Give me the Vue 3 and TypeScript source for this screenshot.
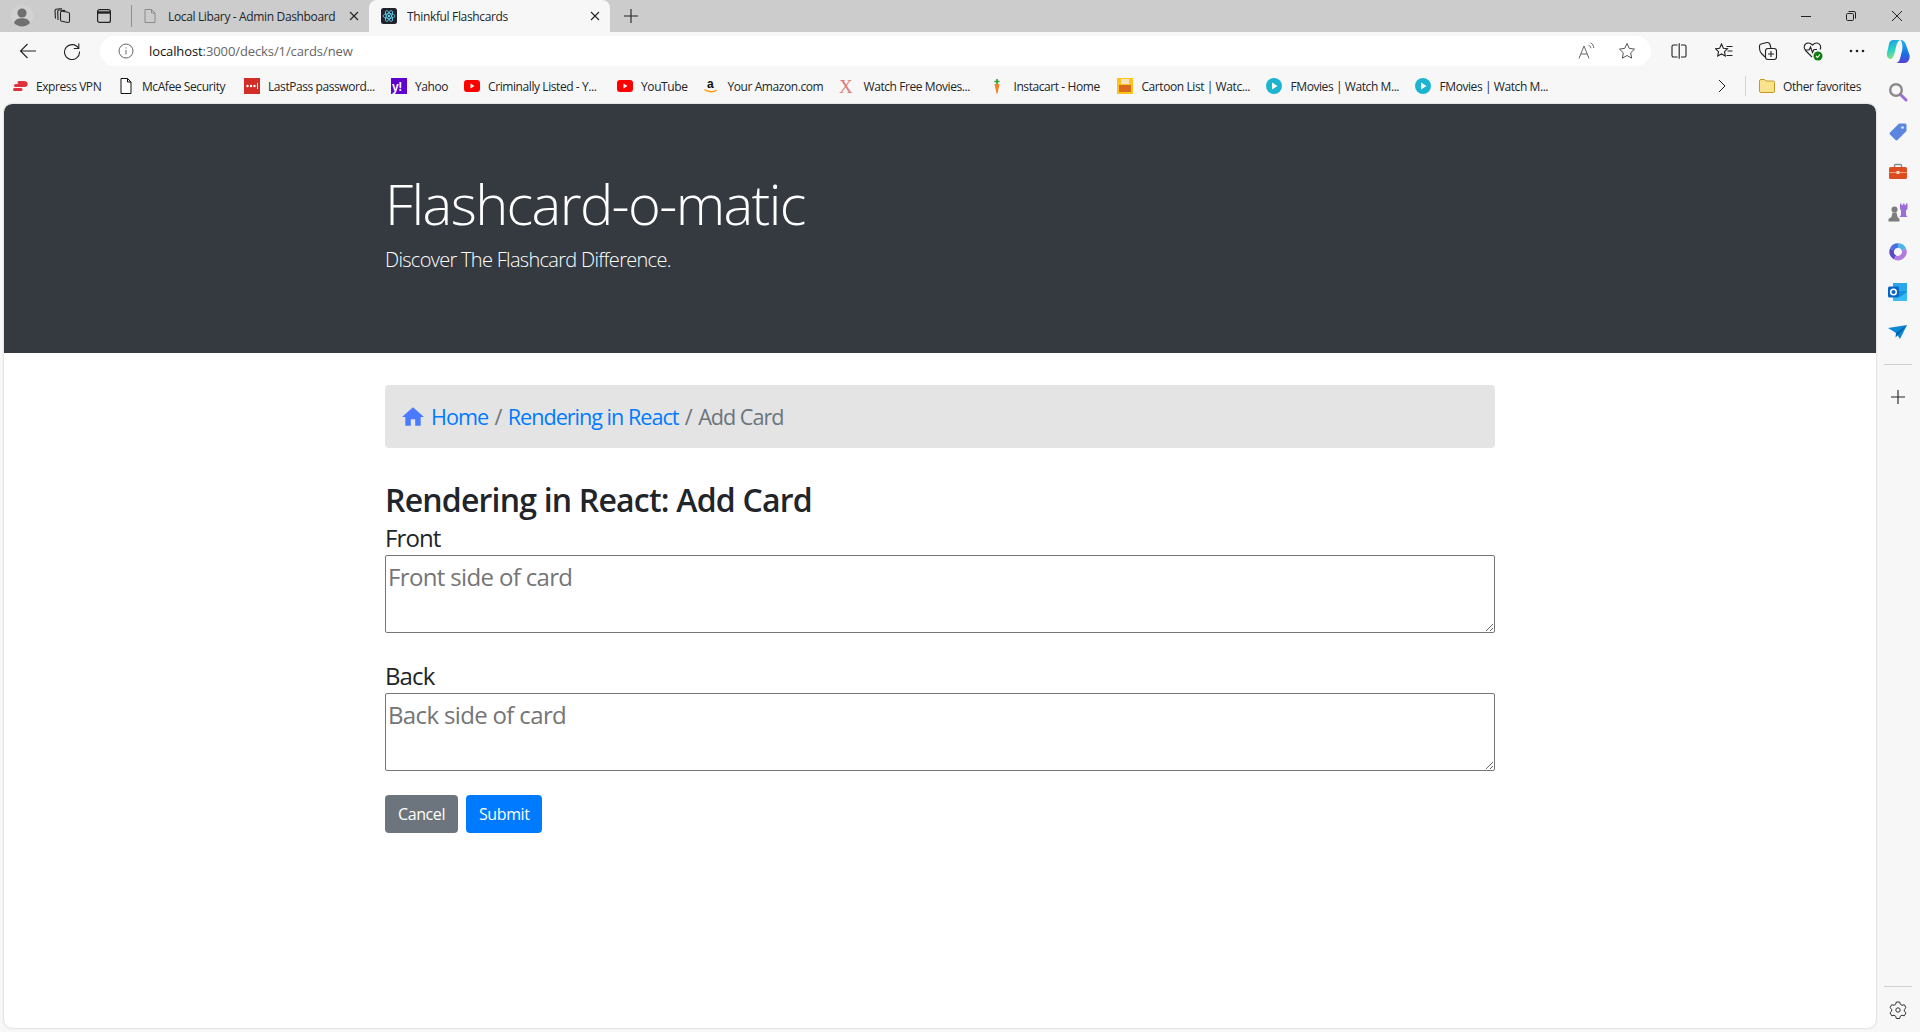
<script setup lang="ts">
import { reactive } from 'vue'

type Mark = { label: string; icon: string; width: number }

const bookmarks: Mark[] = [
  { label: 'Express VPN', icon: 'express', width: 66 },
  { label: 'McAfee Security', icon: 'page', width: 86 },
  { label: 'LastPass password...', icon: 'lastpass', width: 107 },
  { label: 'Yahoo', icon: 'yahoo', width: 32 },
  { label: 'Criminally Listed - Y...', icon: 'youtube', width: 113 },
  { label: 'YouTube', icon: 'youtube', width: 46 },
  { label: 'Your Amazon.com', icon: 'amazon', width: 96 },
  { label: 'Watch Free Movies...', icon: 'x', width: 110 },
  { label: 'Instacart - Home', icon: 'carrot', width: 88 },
  { label: 'Cartoon List | Watc...', icon: 'cartoon', width: 109 },
  { label: 'FMovies | Watch M...', icon: 'fmovies', width: 109 },
  { label: 'FMovies | Watch M...', icon: 'fmovies', width: 109 },
]

const card = reactive({ front: '', back: '' })
</script>

<template>
  <div class="browser">
    <div class="tabstrip">
      <div class="strip-btn">
        <svg width="22" height="22" viewBox="0 0 22 22">
          <circle cx="11" cy="11" r="11" fill="#d2d2d2" />
          <circle cx="11" cy="8" r="4.600" fill="#707070" />
          <path d="M3 18c1-3.500 4-4.800 8-4.800s7 1.300 8 4.800a11 11 0 0 1-16 0z" fill="#707070" />
        </svg>
      </div>
      <div class="strip-btn">
        <svg width="18" height="18" viewBox="0 0 18 18" fill="none" stroke="#222" stroke-width="1.100">
          <path d="M7.500 5.500a1.500 1.500 0 0 1 1.700-1.200l6 1a1.500 1.500 0 0 1 1.300 1.500v7.200a1.500 1.500 0 0 1-1.800 1.500l-6-1.300a1.500 1.500 0 0 1-1.200-1.500z" />
          <path d="M5 13 4.700 4.500A1.500 1.500 0 0 1 6.300 3l6 .6" />
          <path d="M2.500 11.500 2 4A1.800 1.800 0 0 1 3.800 2L9 1.800" />
        </svg>
      </div>
      <div class="strip-btn strip-btn-tabs">
        <svg width="16" height="16" viewBox="0 0 16 16" fill="none" stroke="#222" stroke-width="1.200">
          <rect x="1.600" y="1.600" width="12.800" height="12.800" rx="2" />
          <path d="M1.600 4.500h12.800" stroke-width="2.400" />
        </svg>
      </div>
      <span class="strip-sep"></span>
      <div class="tab">
        <svg class="favicon" width="16" height="16" viewBox="0 0 16 16" fill="none" stroke="#8a8a8a">
          <path d="M3 1.500h6.500L13 5v9.500H3zM9.500 1.500V5H13" />
        </svg>
        <span class="tab-title tab-title-fade">Local Libary - Admin Dashboard</span>
        <svg class="tab-close" width="10" height="10" viewBox="0 0 10 10" stroke="#222" stroke-width="1.100">
          <path d="M1 1l8 8M9 1l-8 8" />
        </svg>
      </div>
      <div class="tab tab-active">
        <svg class="favicon" width="16" height="16" viewBox="0 0 16 16" fill="none" stroke="#61dafb" stroke-width=".8">
          <rect width="16" height="16" rx="2.500" fill="#20232a" stroke="none" />
          <ellipse cx="8" cy="8" rx="6" ry="2.400" />
          <ellipse cx="8" cy="8" rx="6" ry="2.400" transform="rotate(60 8 8)" />
          <ellipse cx="8" cy="8" rx="6" ry="2.400" transform="rotate(120 8 8)" />
          <circle cx="8" cy="8" r="1.200" fill="#61dafb" stroke="none" />
        </svg>
        <span class="tab-title">Thinkful Flashcards</span>
        <svg class="tab-close" width="10" height="10" viewBox="0 0 10 10" stroke="#222" stroke-width="1.100">
          <path d="M1 1l8 8M9 1l-8 8" />
        </svg>
      </div>
      <svg class="new-tab" width="14" height="14" viewBox="0 0 14 14" stroke="#222" stroke-width="1.100">
        <path d="M7 0v14M0 7h14" />
      </svg>
      <div class="window-btns">
        <svg width="10" height="10" viewBox="0 0 10 10" stroke="#222"><path d="M0 5.500h10" /></svg>
        <svg width="10" height="10" viewBox="0 0 10 10" stroke="#222" fill="none">
          <rect x=".5" y="2.500" width="7" height="7" rx="1.200" />
          <path d="M2.500 .5h5.500a1.500 1.500 0 0 1 1.500 1.500v5.500" />
        </svg>
        <svg width="12" height="12" viewBox="0 0 12 12" stroke="#222"><path d="M1 1l10 10M11 1L1 11" /></svg>
      </div>
    </div>

    <div class="toolbar">
      <div class="tool-btn">
        <svg width="18" height="18" viewBox="0 0 18 18" fill="none" stroke="#222" stroke-width="1.100">
          <path d="M17 9H1.500M8.500 2 1.500 9l7 7" />
        </svg>
      </div>
      <div class="tool-btn">
        <svg width="18" height="18" viewBox="0 0 18 18" fill="none" stroke="#222" stroke-width="1.100">
          <path d="M15.800 1.500v5H10.800" />
          <path d="M15.500 6.300A7.500 7.500 0 1 0 16.500 9.500" />
        </svg>
      </div>
      <div class="address">
        <svg width="16" height="16" viewBox="0 0 16 16" fill="none" stroke="#666">
          <circle cx="8" cy="8" r="7" />
          <path d="M8 7v4.500M8 4.300v1.200" />
        </svg>
        <span class="url">localhost<span class="url-dim">:3000/decks/1/cards/new</span></span>
        <svg class="read-aloud" width="18" height="18" viewBox="0 0 18 18" fill="none" stroke="#666">
          <path d="M1 16.500 6 4l5 12.500M2.800 12h6.500" />
          <path d="M10.500 3c1.400.6 2.200 1.800 2.400 3.200M12.500 .8c2 1 3.200 3 3.300 5.200" />
        </svg>
        <svg class="star" width="18" height="18" viewBox="0 0 18 18" fill="none" stroke="#555">
          <path d="M9 1.500l2.300 4.900 5.200.7-3.800 3.700.9 5.300L9 13.500l-4.600 2.600.9-5.300L1.500 7.100l5.200-.7z" />
        </svg>
      </div>
      <div class="tool-icons">
        <svg width="16" height="16" viewBox="0 0 16 16" fill="none" stroke="#222" stroke-width="1.100">
          <path d="M6.500 2H2.500A1.500 1.500 0 0 0 1 3.500v9A1.500 1.500 0 0 0 2.500 14h4M10 2h3.500A1.500 1.500 0 0 1 15 3.500v9a1.500 1.500 0 0 1-1.500 1.500H10M8.200 .2v15.600" />
        </svg>
        <svg width="18" height="16" viewBox="0 0 18 16" fill="none" stroke="#222" stroke-width="1.100">
          <path d="M6.500 1l1.900 4.200 4.100.5-3 2.900.8 4.400-3.800-2.100L2.700 13l.8-4.400-3-2.900 4.100-.5zM11.500 3.500h6M12.500 8h5M11.500 12.500h6" />
        </svg>
        <svg width="20" height="20" viewBox="0 0 20 20" fill="none" stroke="#222" stroke-width="1.100">
          <rect x="7.500" y="7.500" width="11" height="11" rx="2.500" />
          <path d="M13 10v6M10 13h6M7 16 3.500 12.500C2 11 1.500 9 1.500 7V5a2 2 0 0 1 1.500-2L9 1.500c1.500-.3 2.500 .8 3 2l1 3.500" />
        </svg>
        <svg width="22" height="22" viewBox="0 0 22 22" fill="none" stroke="#222" stroke-width="1.100">
          <path d="M10 17 3.500 10.500C1 8 2 3.500 6 3c2-.2 3.500 1 4.500 2 1-1 2.500-2.200 4.500-2 3.500.5 4.500 4 3 6.500" />
          <path d="M3 10h4l1.500-3 2 5.500 1.500-3h3" />
          <circle cx="16" cy="16" r="4.500" fill="#107c10" stroke="none" />
          <path d="M14 16l1.500 1.500 2.500-3" stroke="#fff" />
        </svg>
        <svg width="16" height="4" viewBox="0 0 16 4" fill="#222">
          <circle cx="2" cy="2" r="1.300" />
          <circle cx="8" cy="2" r="1.300" />
          <circle cx="14" cy="2" r="1.300" />
        </svg>
        <svg class="copilot" width="25" height="25" viewBox="0 0 25 25">
          <defs>
            <linearGradient id="cpA" x1="0.200" y1="0" x2="0.500" y2="1">
              <stop offset="0" stop-color="#1a9ee8" />
              <stop offset=".55" stop-color="#2ed3c0" />
              <stop offset="1" stop-color="#9be07c" />
            </linearGradient>
            <linearGradient id="cpB" x1="0.500" y1="0" x2="0.500" y2="1">
              <stop offset="0" stop-color="#27b6f0" />
              <stop offset=".6" stop-color="#1670e6" />
              <stop offset="1" stop-color="#5a3fd6" />
            </linearGradient>
          </defs>
          <path d="M7.500 1H14c-2 1-3 3-3.700 6L8.500 14c-.8 3.300-1.500 5.500-3.500 6C2 20 .5 17.500 1 14L3 5c.5-2.500 2-4 4.500-4z" fill="url(#cpA)" />
          <path d="M14.500 1c3 0 4.500 1.700 5.200 4l3.800 11c.8 3-1 8-5 8h-8c2.200-.8 3-2.700 3.700-5l2-8c.6-3 .3-7-1.700-10z" fill="url(#cpB)" />
        </svg>
      </div>
    </div>

    <div class="body-row">
      <div class="left-col">
        <div class="bookmarks">
          <div v-for="(mark, i) in bookmarks" :key="i" class="mark">
            <svg class="mark-icon" width="16" height="16" viewBox="0 0 16 16">
              <g v-if="mark.icon === 'express'" fill="none" stroke="#e0323c" stroke-width="3" stroke-linecap="round">
                <path d="M7 4.500h5.500c2 0 2.500 2.500 .5 3H3.500" />
                <path d="M2.500 11.500H9" />
              </g>
              <path v-else-if="mark.icon === 'page'" d="M3 .5h6.500L13 4v11.500H3zM9.500 .5V4H13" fill="#fff" stroke="#111" />
              <g v-else-if="mark.icon === 'lastpass'">
                <rect width="16" height="16" fill="#d32d27" />
                <circle cx="3.500" cy="8" r="1.200" fill="#fff" />
                <circle cx="7" cy="8" r="1.200" fill="#fff" />
                <circle cx="10.500" cy="8" r="1.200" fill="#fff" />
                <rect x="13" y="5" width="1" height="6" fill="#fff" />
              </g>
              <g v-else-if="mark.icon === 'yahoo'">
                <rect width="16" height="16" fill="#5f01d1" />
                <text x="1" y="13" class="svg-bold" font-size="12" fill="#fff">y!</text>
              </g>
              <g v-else-if="mark.icon === 'youtube'">
                <rect y="2" width="16" height="12" rx="3" fill="#f00" />
                <path d="M6.500 5.500v5l4-2.500z" fill="#fff" />
              </g>
              <g v-else-if="mark.icon === 'amazon'">
                <text x="4" y="10" class="svg-bold" font-size="12" fill="#111">a</text>
                <path d="M1.500 11.500c4 3 9 3 12 .5" fill="none" stroke="#f90" stroke-width="1.400" />
              </g>
              <text v-else-if="mark.icon === 'x'" x="0" y="15" class="svg-serif" font-size="19" fill="#e07a7a">X</text>
              <g v-else-if="mark.icon === 'carrot'">
                <path d="M5.500 6h5L8.500 15.500h-1z" fill="#f58220" />
                <path d="M8 1v5M5.500 3.500h5" stroke="#2ca02c" stroke-width="1.600" />
              </g>
              <g v-else-if="mark.icon === 'cartoon'">
                <rect width="16" height="16" fill="#fcc419" />
                <rect x="4" y="1" width="8" height="5" fill="#f4e4c4" />
                <rect x="2" y="7" width="12" height="7" fill="#d9691c" />
              </g>
              <g v-else-if="mark.icon === 'fmovies'">
                <circle cx="8" cy="8" r="8" fill="#1db4d2" />
                <path d="M6 4.500v7l5.500-3.500z" fill="#fff" />
              </g>
            </svg>
            <span class="mark-label" :style="{ minWidth: mark.width + 'px' }">{{ mark.label }}</span>
          </div>
          <svg class="more" width="8" height="14" viewBox="0 0 8 14" fill="none" stroke="#222">
            <path d="M1 1l6 6-6 6" />
          </svg>
          <span class="mark-sep"></span>
          <svg class="folder" width="16" height="16" viewBox="0 0 16 16">
            <path d="M.5 3a1.500 1.500 0 0 1 1.500-1.500h3.500L7 3h7a1.500 1.500 0 0 1 1.500 1.500V13a1.500 1.500 0 0 1-1.500 1.500H2A1.500 1.500 0 0 1 .5 13z" fill="#fbe38e" stroke="#c79a1e" />
          </svg>
          <span class="mark-label">Other favorites</span>
        </div>

        <div class="page">
          <header class="jumbotron">
            <div class="container">
              <h1 class="display">Flashcard-o-matic</h1>
              <p class="lead">Discover The Flashcard Difference.</p>
            </div>
          </header>

          <main class="container">
            <nav class="crumbs">
              <svg class="home" width="22" height="19" viewBox="2 3 20 17" fill="#4a7bff">
                <path d="M10 20v-6h4v6h5v-8h3L12 3 2 12h3v8z" />
              </svg>
              <a class="crumb-link">Home</a>
              <span class="crumb-sep">/</span>
              <a class="crumb-link">Rendering in React</a>
              <span class="crumb-sep">/</span>
              <span class="crumb-now">Add Card</span>
            </nav>

            <h2 class="heading">Rendering in React: Add Card</h2>

            <form class="card-form" @submit.prevent>
              <label class="field-label" for="front">Front</label>
              <textarea id="front" v-model="card.front" class="field" placeholder="Front side of card"></textarea>
              <label class="field-label field-label-back" for="back">Back</label>
              <textarea id="back" v-model="card.back" class="field" placeholder="Back side of card"></textarea>
              <div class="actions">
                <button type="button" class="btn btn-cancel">Cancel</button>
                <button type="submit" class="btn btn-submit">Submit</button>
              </div>
            </form>
          </main>
        </div>
      </div>

      <aside class="sidebar">
        <svg width="20" height="20" viewBox="0 0 20 20" fill="none">
          <path d="M12.500 12.500 18 18" stroke="#9b6fd6" stroke-width="3" stroke-linecap="round" />
          <circle cx="8" cy="8" r="5.800" stroke="#8a8a8a" stroke-width="2.400" />
        </svg>
        <svg width="20" height="20" viewBox="0 0 20 20">
          <path d="M11 1.500h6a1.500 1.500 0 0 1 1.500 1.500v6L9.500 18a1.500 1.500 0 0 1-2 0L2 12.500a1.500 1.500 0 0 1 0-2z" fill="#5b86e0" />
          <circle cx="14.500" cy="5.500" r="1.300" fill="#dfe8fb" />
        </svg>
        <svg width="20" height="20" viewBox="0 0 20 20">
          <path d="M6.500 5V3.500a1 1 0 0 1 1-1h5a1 1 0 0 1 1 1V5" fill="none" stroke="#8a8a8a" stroke-width="1.400" />
          <rect x="1" y="5" width="18" height="12" rx="1.500" fill="#dd4d1f" />
          <rect x="1" y="10" width="18" height="1" fill="#f3a07d" />
          <rect x="8.500" y="9" width="3" height="3" fill="#e9d8cf" />
        </svg>
        <svg width="20" height="20" viewBox="0 0 20 20">
          <path d="M12 1.500h1.500V3H15V1.500h1.500V3H18V1.500h1.500V7L18 8.500V13l1.500 2h-8l1.500-2V8.500L12 7z" fill="#9b6fd6" />
          <circle cx="6.500" cy="7.500" r="3" fill="#7d7d7d" />
          <path d="M4.500 10.500h4l1 4.500 2 2v2.500H.5V17l3-2z" fill="#7d7d7d" />
        </svg>
        <svg width="20" height="20" viewBox="0 0 20 20" fill="none" stroke-width="4.600">
          <path d="M10 3.500a6.500 6.500 0 0 1 6 4" stroke="#4fb4e8" />
          <path d="M4 7.500a6.500 6.500 0 0 1 6-4" stroke="#4f6fe0" />
          <path d="M4 7.500a6.500 6.500 0 0 0 3 8" stroke="#5a48c9" />
          <path d="M7 15.500a6.500 6.500 0 0 0 9-8" stroke="#b47ae0" />
        </svg>
        <svg width="20" height="20" viewBox="0 0 20 20">
          <rect x="5" y="1" width="14" height="9" fill="#28a8ea" />
          <rect x="5" y="9" width="14" height="10" rx="1" fill="#1490df" />
          <path d="M5 10l7 5 7-5v9H5z" fill="#50d9ff" opacity=".6" />
          <rect x="0" y="4.500" width="11" height="11" rx="1.500" fill="#0a64c2" />
          <circle cx="5.500" cy="10" r="2.800" fill="none" stroke="#fff" stroke-width="1.500" />
        </svg>
        <svg width="20" height="20" viewBox="0 0 20 20">
          <path d="M0 6 19 3 12 17 8 11z" fill="#0c88d8" />
          <path d="M19 3 8 11l-.5 4.500 3-3z" fill="#0561a8" />
        </svg>
        <span class="side-sep"></span>
        <svg class="side-plus" width="14" height="14" viewBox="0 0 14 14" stroke="#222" stroke-width="1.100">
          <path d="M7 0v14M0 7h14" />
        </svg>
        <span class="side-sep side-sep-bottom"></span>
        <svg class="side-gear" width="18" height="18" viewBox="0 0 18 18" fill="none" stroke="#333">
          <path d="M7.300 1h3.400l.6 2.300 1.700 1 2.300-.6 1.700 3-1.700 1.600v1.900l1.700 1.600-1.700 3-2.300-.6-1.700 1-.6 2.300H7.300l-.6-2.300-1.700-1-2.300.6-1.700-3 1.700-1.600V8.300L1 6.700l1.700-3 2.300.6 1.700-1z" />
          <circle cx="9" cy="9" r="2.200" />
        </svg>
      </aside>
    </div>
  </div>
</template>

<style>
html,
body {
  margin: 0;
  overflow: hidden;
}
</style>

<style scoped>
.browser {
  width: 1920px;
  height: 1032px;
  display: flex;
  flex-direction: column;
  background: #f7f7f7;
  font-family: "Open Sans", "Noto Sans", sans-serif;
  color: #212529;
  overflow: hidden;
}

.tabstrip {
  height: 32px;
  flex: none;
  display: flex;
  align-items: center;
  padding-left: 2px;
  background: #cccccc;
}

.strip-btn {
  width: 40px;
  height: 32px;
  display: flex;
  align-items: center;
  justify-content: center;
}

.strip-btn-tabs {
  margin-left: 2px;
}

.strip-sep {
  width: 1px;
  height: 22px;
  margin-left: 7px;
  background: #8f8f8f;
}

.tab {
  width: 237px;
  height: 32px;
  box-sizing: border-box;
  display: flex;
  align-items: center;
  padding: 0 10px;
  font-size: 12px;
  letter-spacing: -0.35px;
}

.tab-active {
  width: 241px;
  padding: 0 10px 0 12px;
  background: #f7f7f7;
  border-radius: 8px 8px 0 0;
}

.favicon {
  flex: none;
  margin-right: 10px;
}

.tab-title {
  flex: 1;
  white-space: nowrap;
  overflow: hidden;
}

.tab-title-fade {
  margin-right: 12px;
}

.tab-close {
  flex: none;
}

.new-tab {
  margin-left: 14px;
}

.window-btns {
  margin-left: auto;
  display: flex;
  align-items: center;
  gap: 35px;
  padding-right: 17px;
}

.toolbar {
  height: 38px;
  flex: none;
  display: flex;
  align-items: center;
  padding-left: 6px;
}

.tool-btn {
  width: 44px;
  height: 30px;
  flex: none;
  display: flex;
  align-items: center;
  justify-content: center;
}

.address {
  width: 1551px;
  height: 30px;
  flex: none;
  margin-left: 6px;
  box-sizing: border-box;
  display: flex;
  align-items: center;
  padding: 0 15px 0 18px;
  background: #fff;
  border-radius: 15px;
}

.url {
  margin-left: 15px;
  font-size: 13px;
  letter-spacing: -0.1px;
  color: #111;
}

.url-dim {
  color: #666;
}

.read-aloud {
  margin-left: auto;
}

.star {
  margin-left: 22px;
}

.tool-icons {
  flex: none;
  display: grid;
  grid-template-columns: repeat(5, 44.5px) 41px;
  justify-items: center;
  align-items: center;
  margin-left: 6px;
}

.copilot {
  margin-right: 4px;
}

.body-row {
  flex: 1;
  min-height: 0;
  display: flex;
}

.left-col {
  width: 1876px;
  display: flex;
  flex-direction: column;
}

.bookmarks {
  height: 34px;
  flex: none;
  box-sizing: border-box;
  display: flex;
  align-items: center;
  padding: 0 0 2px 12px;
  gap: 16px;
  font-size: 12px;
  letter-spacing: -0.42px;
}

.mark {
  flex: none;
  display: flex;
  align-items: center;
  gap: 8px;
}

.mark-icon {
  flex: none;
}

.mark-label {
  white-space: nowrap;
}

.svg-bold {
  font-family: "Liberation Sans", sans-serif;
  font-weight: 700;
}

.svg-serif {
  font-family: "Liberation Serif", serif;
}

.more {
  margin-left: auto;
}

.mark-sep {
  width: 1px;
  height: 20px;
  margin-left: 3px;
  background: #d4d4d4;
}

.folder {
  margin-left: -3px;
  margin-right: -8px;
}

.bookmarks > .mark-label {
  margin-right: 15px;
}

.page {
  flex: 1;
  margin: 0 0 4px 4px;
  background: #fff;
  border-radius: 8px;
  box-shadow: 0 0 2px rgba(0, 0, 0, 0.25);
  overflow: hidden;
}

.jumbotron {
  height: 249px;
  box-sizing: border-box;
  padding-top: 66px;
  background: #343a40;
  color: #fff;
  border-radius: 8px 8px 0 0;
}

.container {
  width: 1110px;
  margin: 0 auto;
}

.display {
  margin: 0;
  font-size: 56px;
  font-weight: 300;
  line-height: 67px;
  letter-spacing: -1.6px;
}

.lead {
  margin: 8px 0 0;
  font-size: 20px;
  font-weight: 300;
  line-height: 30px;
  letter-spacing: -0.7px;
}

.crumbs {
  margin-top: 32px;
  height: 63px;
  box-sizing: border-box;
  display: flex;
  align-items: center;
  padding-left: 17px;
  background: #e4e4e4;
  border-radius: 4px;
  font-size: 21.600px;
  letter-spacing: -1px;
}

.home {
  margin-right: 7px;
}

.crumb-link {
  color: #007bff;
}

.crumb-sep {
  margin: 0 6.400px;
  color: #6c757d;
}

.crumb-now {
  color: #6c757d;
}

.heading {
  margin: 29px 0 0;
  font-size: 32px;
  font-weight: 600;
  line-height: 46px;
  letter-spacing: -0.8px;
}

.card-form {
  display: flex;
  flex-direction: column;
}

.field-label {
  margin-bottom: 2px;
  font-size: 24px;
  line-height: 30px;
  letter-spacing: -0.9px;
}

.field-label-back {
  margin-top: 28px;
}

.field {
  height: 78px;
  box-sizing: border-box;
  padding: 5px 2px 2px;
  border: 1px solid #767676;
  border-radius: 2px;
  font-family: inherit;
  font-size: 24px;
  letter-spacing: -0.65px;
  line-height: 32px;
}

.field::placeholder {
  color: #757575;
}

.actions {
  display: flex;
  gap: 8px;
  margin-top: 24px;
}

.btn {
  height: 38px;
  box-sizing: border-box;
  padding: 0 13px;
  border: none;
  border-radius: 4px;
  color: #fff;
  font-family: inherit;
  font-size: 16px;
  letter-spacing: -0.4px;
}

.btn-cancel {
  width: 73px;
  background: #6c757d;
}

.btn-submit {
  width: 76px;
  background: #007bff;
}

.sidebar {
  width: 44px;
  flex: none;
  display: flex;
  flex-direction: column;
  align-items: center;
  gap: 20px;
  padding-top: 12px;
  box-sizing: border-box;
}

.side-sep {
  width: 28px;
  height: 1px;
  flex: none;
  margin-top: 2px;
  background: #d0d0d0;
}

.side-plus {
  margin-top: 5px;
}

.side-sep-bottom {
  margin-top: auto;
}

.side-gear {
  margin-bottom: 13px;
  margin-top: -6px;
}
</style>
